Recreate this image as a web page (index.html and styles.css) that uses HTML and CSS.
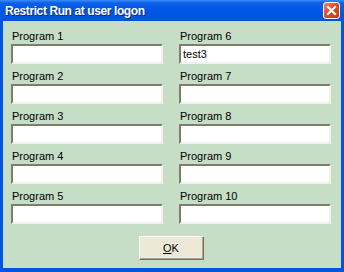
FILE: index.html
```html
<!DOCTYPE html>
<html lang="en">
<head>
    <meta charset="UTF-8">
    <title>Restrict Run at user logon</title>
    <link rel="stylesheet" href="styles.css">
</head>
<body>
    <div class="window">
        <div class="titlebar">
            <span class="title">Restrict Run at user logon</span>
            <span class="close">
                <svg width="11" height="11" viewBox="0 0 11 11">
                    <path d="M2 2 L9 9 M9 2 L2 9" stroke="#fff" stroke-width="2.2" stroke-linecap="square"/>
                </svg>
            </span>
        </div>
        <div class="content">
            <div class="fields">
                <div class="field">
                    <label>Program 1</label>
                    <input type="text">
                </div>
                <div class="field">
                    <label>Program 6</label>
                    <input type="text" value="test3">
                </div>
                <div class="field">
                    <label>Program 2</label>
                    <input type="text">
                </div>
                <div class="field">
                    <label>Program 7</label>
                    <input type="text">
                </div>
                <div class="field">
                    <label>Program 3</label>
                    <input type="text">
                </div>
                <div class="field">
                    <label>Program 8</label>
                    <input type="text">
                </div>
                <div class="field">
                    <label>Program 4</label>
                    <input type="text">
                </div>
                <div class="field">
                    <label>Program 9</label>
                    <input type="text">
                </div>
                <div class="field">
                    <label>Program 5</label>
                    <input type="text">
                </div>
                <div class="field">
                    <label>Program 10</label>
                    <input type="text">
                </div>
            </div>
            <div class="buttons">
                <button><u>O</u>K</button>
            </div>
        </div>
    </div>
</body>
</html>
```

FILE: styles.css
```css
body {
    margin: 0;
    font-family: "Liberation Sans", Arial, sans-serif;
}
.window {
    width: 344px;
    height: 272px;
    box-sizing: border-box;
    background: #0054e3;
    padding: 0 3px 4px 3px;
    display: flex;
    flex-direction: column;
}
.titlebar {
    height: 21px;
    margin: 0 -3px;
    padding: 0 4px 0 5px;
    display: flex;
    align-items: center;
    justify-content: space-between;
    background: linear-gradient(#3c8cf8 0, #0a5fe8 3px, #0058e6 50%, #0052dc 100%);
    flex-shrink: 0;
}
.title {
    color: #fff;
    font-weight: bold;
    font-size: 12px;
    letter-spacing: -0.4px;
    text-shadow: 1px 1px 0 #0a2a80;
}
.close {
    width: 17px;
    height: 17px;
    box-sizing: border-box;
    border: 1px solid #fff;
    border-radius: 3px;
    background: linear-gradient(135deg, #f08060, #e04a20 50%, #c83a10);
    display: flex;
    align-items: center;
    justify-content: center;
}
.content {
    flex: 1;
    background: #c6dec6;
    padding: 7px 10px 0 8px;
}
.fields {
    display: grid;
    grid-template-columns: 152px 152px;
    column-gap: 16px;
    row-gap: 4px;
}
.field {
    display: flex;
    flex-direction: column;
}
label {
    font-size: 11px;
    line-height: 16px;
    padding-left: 1px;
    color: #000;
}
input {
    height: 20px;
    box-sizing: border-box;
    margin: 0;
    padding: 0 2px;
    border: 2px solid;
    border-color: #7f7b6e #f4f1e8 #f4f1e8 #7f7b6e;
    background: #fff;
    font-family: "Liberation Sans", Arial, sans-serif;
    font-size: 11px;
    outline: none;
}
.buttons {
    display: flex;
    justify-content: center;
    margin-top: 12px;
}
button {
    width: 65px;
    height: 24px;
    border: 1px solid;
    border-color: #fff #716f64 #716f64 #fff;
    box-shadow: inset -1px -1px 0 #aca899;
    background: #ece9d8;
    font-family: "Liberation Sans", Arial, sans-serif;
    font-size: 11px;
    color: #000;
    padding: 0;
}
```
